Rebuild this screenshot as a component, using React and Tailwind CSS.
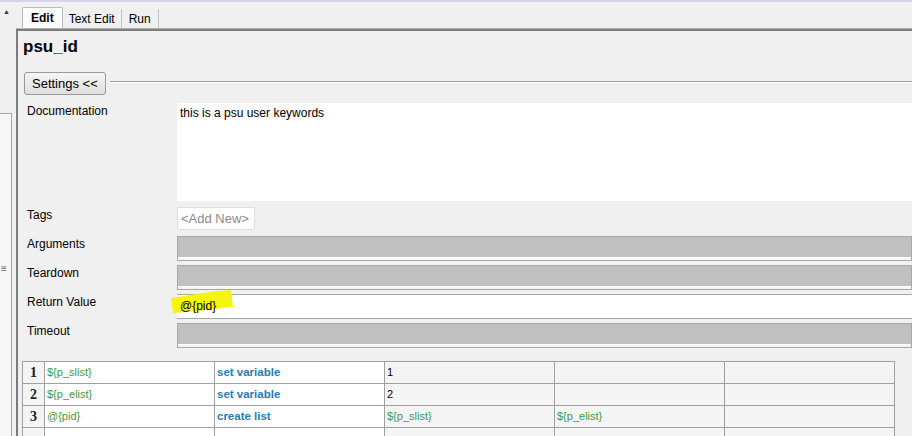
import React from 'react';

const font = { fontFamily: '"Liberation Sans", Arial, sans-serif' };

const rows = [
  ['1', '${p_slist}', 'set variable', '1', '', ''],
  ['2', '${p_elist}', 'set variable', '2', '', ''],
  ['3', '@{pid}', 'create list', '${p_slist}', '${p_elist}', ''],
  ['', '', '', '', '', ''],
];

function GrayField() {
  return (
    <div className="h-[25px] flex-1 border border-[#a8a8a8] bg-[#f4f4f4]">
      <div className="h-[21px] bg-[#c0c0c0] border-b border-white" />
    </div>
  );
}

function Row({ label, children }) {
  return (
    <div className="flex h-[29px]">
      <div className="w-[159px] shrink-0 pl-[9px] pt-[1px] text-[12px] leading-[14px] text-black">{label}</div>
      <div className="flex-1 flex items-start">{children}</div>
    </div>
  );
}

export default function App() {
  return (
    <div className="w-[912px] h-[436px] bg-[#f0f0f0] overflow-hidden flex flex-col" style={font}>
      <div className="h-[2px] bg-[#d6d2ea] shrink-0" />
      <div className="flex flex-1 min-h-0">
        {/* left strip */}
        <div className="w-[16px] shrink-0 flex flex-col">
          <div className="h-[111px] pl-[3px] pt-[6px] text-[7px] text-[#333] leading-none">▲</div>
          <div className="w-[12px] flex-1 border-t border-r border-[#a8a8a8] bg-[#f6f6f6] relative">
            <div className="absolute left-[1px] top-[150px] text-[10px] text-[#666] leading-none">≡</div>
          </div>
        </div>

        {/* main */}
        <div className="flex-1 flex flex-col min-w-0">
          {/* tabs */}
          <div className="h-[27px] shrink-0 flex items-end pl-[6px] border-b border-[#b4b4b4] text-[12px]">
            <div className="h-[21px] px-[8px] flex items-center font-bold bg-[#fbfbfb] border border-b-0 border-[#b9b9b9] rounded-t-[2px]">
              Edit
            </div>
            <div className="h-[19px] px-[6px] flex items-center border-r border-[#c4c4c4]">Text Edit</div>
            <div className="h-[19px] px-[7px] flex items-center border-r border-[#c4c4c4]">Run</div>
          </div>

          {/* panel */}
          <div className="flex-1 border-t-2 border-l-2 border-[#7c7c7c] flex flex-col min-h-0">
            <div className="h-[33px] shrink-0 pl-[5px] pt-[5px] text-[17px] font-bold leading-tight text-black">psu_id</div>

            <div className="h-[39px] shrink-0 flex items-start pl-[6px] pt-[8px]">
              <div className="h-[23px] px-[7px] flex items-center text-[13px] border border-[#9a9a9a] rounded-[3px] bg-gradient-to-b from-[#f6f6f6] to-[#dedede]">
                Settings &lt;&lt;
              </div>
              <div className="flex-1 ml-[4px] mt-[9px] h-[2px] border-t border-[#a0a0a0] border-b border-b-white" />
            </div>

            <div className="flex flex-col shrink-0">
              <div className="flex h-[104px]">
                <div className="w-[159px] shrink-0 pl-[9px] pt-[1px] text-[12px] leading-[14px]">Documentation</div>
                <div className="flex-1 h-[98px] bg-white pl-[3px] pt-[3px] text-[12px] leading-[14px]">this is a psu user keywords</div>
              </div>
              <Row label="Tags">
                <div className="h-[23px] w-[78px] bg-white border border-[#dedede] flex items-center pl-[3px] text-[13px] text-[#8a8a8a]">
                  &lt;Add New&gt;
                </div>
              </Row>
              <Row label="Arguments">
                <GrayField />
              </Row>
              <Row label="Teardown">
                <GrayField />
              </Row>
              <Row label="Return Value">
                <div className="relative h-[25px] flex-1 border-y border-[#a8a8a8] bg-white">
                  <svg className="absolute left-[-8px] top-[-5px]" width="70" height="26" viewBox="0 0 70 26">
                    <path d="M2 8 C20 5 45 1 62 0 L64 17 C45 19 20 22 4 23 Z" fill="#f4f400" opacity="0.95" />
                  </svg>
                  <div className="relative pl-[3px] pt-[5px] text-[12px] leading-none">@{'{pid}'}</div>
                </div>
              </Row>
              <Row label="Timeout">
                <GrayField />
              </Row>
            </div>

            {/* keyword table */}
            <div className="pl-[4px] pt-[9px]">
              <table className="border-collapse text-[11px]">
                <tbody>
                  {rows.map((r, i) => (
                    <tr key={i} className="h-[22px]">
                      <td className="w-[22px] border border-[#a0a0a0] bg-[#f4f4f4] text-center text-[14px] font-bold text-[#222]" style={{ fontFamily: '"Liberation Serif", serif' }}>
                        {r[0]}
                      </td>
                      <td className="w-[170px] border border-[#a0a0a0] bg-white pl-[2px] text-[#3f9a3f]">{r[1]}</td>
                      <td className="w-[170px] border border-[#a0a0a0] bg-white pl-[2px] font-bold text-[11.5px] text-[#1f7cb6]">{r[2]}</td>
                      <td className={`w-[170px] border border-[#a0a0a0] bg-[#f4f4f4] pl-[2px] ${i === 2 ? 'text-[#3f9a3f]' : 'text-black'}`}>{r[3]}</td>
                      <td className="w-[170px] border border-[#a0a0a0] bg-[#f4f4f4] pl-[2px] text-[#3f9a3f]">{r[4]}</td>
                      <td className="w-[170px] border border-[#a0a0a0] bg-[#f4f4f4] pl-[2px]">{r[5]}</td>
                    </tr>
                  ))}
                </tbody>
              </table>
            </div>
          </div>
        </div>
      </div>
    </div>
  );
}
